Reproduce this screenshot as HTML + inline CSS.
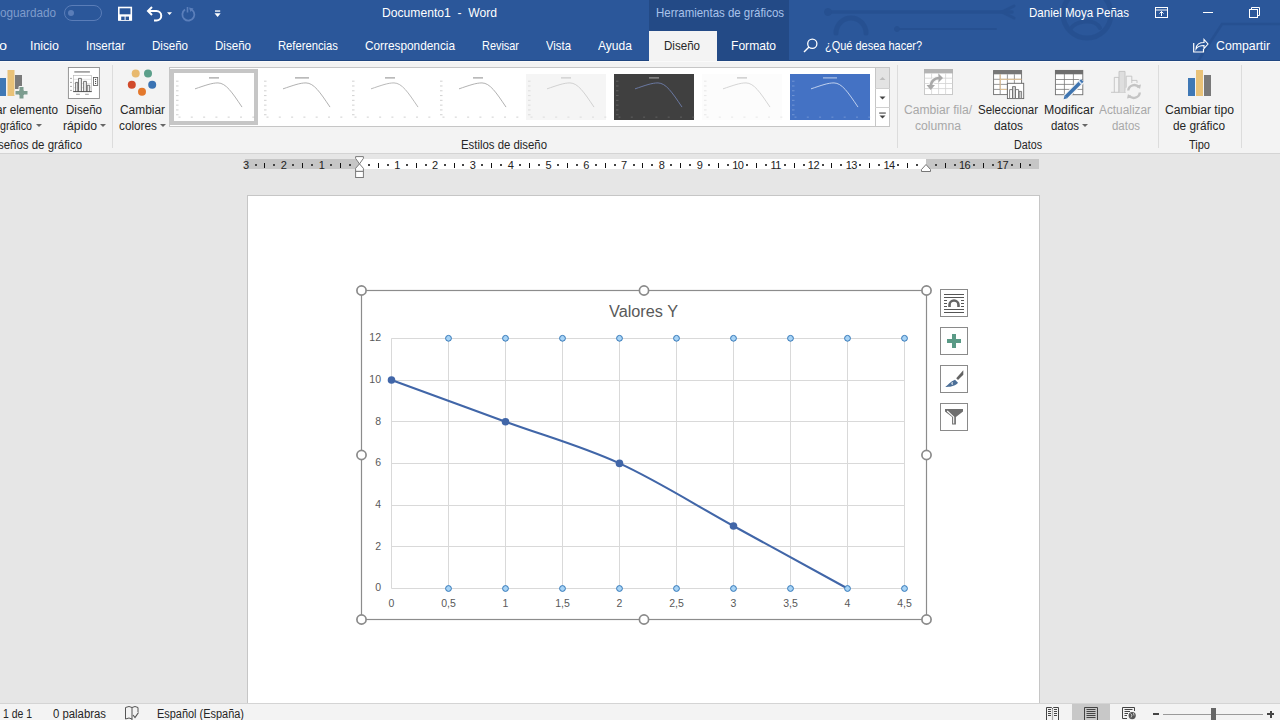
<!DOCTYPE html>
<html><head><meta charset="utf-8">
<style>
*{margin:0;padding:0;box-sizing:border-box}
html,body{width:1280px;height:720px;overflow:hidden;background:#e6e6e6;font-family:"Liberation Sans",sans-serif}
.a{position:absolute;white-space:nowrap}
.f{position:absolute;white-space:nowrap;transform-origin:0 0;transform:scaleX(var(--s,1))}
svg{position:absolute;overflow:visible}
#title{position:absolute;left:0;top:0;width:1280px;height:61px;background:#2b579a}
#ctx{position:absolute;left:649px;top:0;width:140px;height:61px;background:#234a86}
.tb{color:#fff;font-size:13px;line-height:13px;top:6px}
.tab{color:#fff;font-size:13px;line-height:13px;top:39px}
#ribbon{position:absolute;left:0;top:61px;width:1280px;height:93px;background:#f3f3f3;border-bottom:1px solid #d4d4d4}
.r1{font-size:12px;line-height:12px;color:#262626;top:104px}
.r2{font-size:12px;line-height:12px;color:#262626;top:120px}
.gl{font-size:12px;line-height:12px;color:#262626;top:139px}
.dis{color:#a8a8a8}
.sep{position:absolute;top:65px;width:1px;height:83px;background:#dcdcdc}
.dd{position:absolute;width:0;height:0;border-left:3px solid transparent;border-right:3px solid transparent;border-top:3.5px solid #666}
#page{position:absolute;left:247px;top:195px;width:793px;height:530px;background:#fff;border:1px solid #c6c6c6}
#status{position:absolute;left:0;top:703px;width:1280px;height:17px;background:#f3f3f3;border-top:1px solid #d4d4d4}
.st{font-size:12px;line-height:12px;color:#262626;top:708px}
.rn{position:absolute;top:159.5px;font-size:11px;line-height:11px;color:#222;text-align:center;width:16px}
.thumb{position:absolute;top:73px;width:80px;height:48px}
.cb{position:absolute;left:940px;width:28px;height:28px;background:#fff;border:1px solid #8a8a8a}
.yl{position:absolute;font-size:10.5px;line-height:10.5px;color:#595959;text-align:right;width:30px}
.xl{position:absolute;font-size:10.5px;line-height:10.5px;color:#595959;text-align:center;width:30px;top:598px}
</style></head><body>
<div id="title"></div>
<svg style="left:0;top:0" width="1280" height="61" viewBox="0 0 1280 61"><g fill="none" stroke="#234c8a" stroke-linecap="round" opacity="0.55"><path d="M828 12H1012" stroke-width="3.5"/><path d="M1014 6L1002 12L1014 18" stroke-width="3"/><circle cx="828" cy="12" r="3.5" fill="#234c8a"/><path d="M836 33A15 15 0 0 1 866 33" stroke-width="5"/><path d="M897 29H996" stroke-width="2"/><circle cx="897" cy="29" r="2.5" fill="#234c8a"/><circle cx="1087" cy="14" r="24" stroke-width="5"/><path d="M1070 30C1075 20 1095 18 1100 28" stroke-width="4"/><path d="M1198 61L1222 24H1280" stroke-width="2.5"/></g></svg>
<div id="ctx"></div>

<!-- title row -->
<div class="f tb" style="left:0;--s:0.9007;color:#7f9ccc">oguardado</div>
<div class="a" style="left:64px;top:5px;width:38px;height:16px;border:1px solid #5a7db8;border-radius:8px"></div>
<div class="a" style="left:68px;top:10px;width:6px;height:6px;border-radius:3px;background:#5a7db8"></div>
<svg style="left:110px;top:2px" width="120" height="24" viewBox="0 0 120 24"><rect x="8.8" y="5.5" width="12.5" height="12.5" fill="none" stroke="#fff" stroke-width="1.6"/><rect x="9" y="12.3" width="12" height="6" fill="#fff"/><rect x="11.2" y="14.6" width="3.4" height="3.4" fill="#2b579a"/><rect x="15.6" y="14.6" width="3.4" height="3.4" fill="#2b579a"/><path d="M38 9H46.5A4.7 4.7 0 0 1 46.5 18.5H44" fill="none" stroke="#fff" stroke-width="2"/><path d="M42 5L38 9L42 13" fill="none" stroke="#fff" stroke-width="2"/><path d="M57 10.3H62L59.5 13.1Z" fill="#fff"/><path d="M80 6.8A6 6 0 1 1 75 7.6" fill="none" stroke="#5b7fbb" stroke-width="1.8"/><path d="M77.5 5V10.5" fill="none" stroke="#5b7fbb" stroke-width="1.6"/><path d="M79 5.5L83.5 6.5L80.5 10Z" fill="#5b7fbb"/><rect x="105" y="8.4" width="5.2" height="1.3" fill="#fff"/><path d="M104.5 11.2H110.7L107.6 15Z" fill="#fff"/></svg>




<div class="f tb" style="left:382px;--s:0.9326">Documento1 &nbsp;-&nbsp; Word</div>
<div class="f tb" style="left:656px;--s:0.8813;color:#a9c2ea">Herramientas de gráficos</div>
<div class="f tb" style="left:1029px;--s:0.8870">Daniel Moya Peñas</div>
<svg style="left:1155px;top:7px" width="14" height="11" viewBox="0 0 14 11"><rect x="0.5" y="0.5" width="12" height="10" fill="none" stroke="#fff" stroke-width="1"/><path d="M0.5 3H12.5" stroke="#fff"/><path d="M6.5 9V4.5M4.5 6.5L6.5 4.5L8.5 6.5" fill="none" stroke="#fff"/></svg>
<div class="a" style="left:1203px;top:12px;width:10px;height:1px;background:#fff"></div>
<svg style="left:1249px;top:7px" width="11" height="11" viewBox="0 0 11 11"><rect x="0.5" y="2.5" width="8" height="8" fill="none" stroke="#fff"/><path d="M2.5 2.5V0.5H10.5V8.5H8.5" fill="none" stroke="#fff"/></svg>

<!-- tabs -->
<div class="f tab" style="left:-1px;--s:1.1058">o</div>
<div class="f tab" style="left:30px;--s:0.9552">Inicio</div>
<div class="f tab" style="left:86px;--s:0.8848">Insertar</div>
<div class="f tab" style="left:152px;--s:0.8896">Diseño</div>
<div class="f tab" style="left:215px;--s:0.8896">Diseño</div>
<div class="f tab" style="left:278px;--s:0.8649">Referencias</div>
<div class="f tab" style="left:365px;--s:0.9089">Correspondencia</div>
<div class="f tab" style="left:482px;--s:0.8394">Revisar</div>
<div class="f tab" style="left:546px;--s:0.8719">Vista</div>
<div class="f tab" style="left:598px;--s:0.9279">Ayuda</div>
<div class="a" style="left:649px;top:31px;width:68px;height:31px;background:#f3f3f3"></div>
<div class="f tab" style="left:664px;--s:0.8896;color:#262626">Diseño</div>
<div class="f tab" style="left:731px;--s:0.9296">Formato</div>
<svg style="left:803px;top:38px" width="15" height="15" viewBox="0 0 15 15"><circle cx="9.3" cy="5.7" r="4.6" fill="none" stroke="#fff" stroke-width="1.3"/><path d="M6 9L1 14" stroke="#fff" stroke-width="1.4"/></svg>
<div class="f tab" style="left:825px;--s:0.8442">¿Qué desea hacer?</div>
<svg style="left:1193px;top:38px" width="16" height="15" viewBox="0 0 16 15"><path d="M0.7 5V14H10.5V11" fill="none" stroke="#fff" stroke-width="1.2"/><path d="M3 11C3 6 7 4.5 11 4.5V1.5L15 6L11 10.5V7.5C7 7.5 4.5 8.5 3 11Z" fill="none" stroke="#fff" stroke-width="1.1"/></svg>
<div class="f tab" style="left:1216px;--s:0.9461">Compartir</div>

<div id="ribbon"></div>
<div class="a" style="left:0;top:60px;width:649px;height:1px;background:#204680"></div><div class="a" style="left:717px;top:60px;width:563px;height:1px;background:#204680"></div><div class="a" style="left:0;top:61px;width:1280px;height:1px;background:#fafafa"></div>

<!-- group 1 -->
<svg style="left:0;top:69px" width="30" height="31" viewBox="0 0 30 31"><rect x="-2" y="9" width="8" height="18" fill="#3f78b5"/><rect x="7.5" y="1" width="7" height="26" fill="#e9c278"/><rect x="15" y="6" width="7" height="14" fill="#7a7a7a"/><path d="M19 17.5H24V21.5H28V26H24V30H19V26H15V21.5H19Z" fill="#7c9c8f" stroke="#f3f3f3" stroke-width="1"/></svg>
<div class="f r1" style="left:-4.5px;--s:0.9783">ar elemento</div>
<div class="f r2" style="left:0;--s:0.8881">gráfico</div>
<div class="dd" style="left:36px;top:124px"></div>
<div class="f gl" style="left:-2px;--s:0.9539">seños de gráfico</div>

<svg style="left:64px;top:64px" width="40" height="38" viewBox="0 0 40 38"><rect x="4.4" y="3.5" width="31" height="31" fill="#fff" stroke="#8c8c8c" stroke-width="0.9"/><rect x="10.3" y="7.1" width="15.6" height="1.6" fill="#9a9a9a"/><rect x="9.4" y="11.3" width="18.2" height="16.2" fill="none" stroke="#b0b0b0" stroke-width="0.6"/><path d="M9.4 15.3H27.6M9.4 19.5H27.6M9.4 23.7H27.6" stroke="#c8c8c8" stroke-width="0.5"/><path d="M11.6 27.5V18.4H13.8V27.5M14.5 27.5V14.4H17.4V27.5M19.6 27.5V17.4H22.4V27.5M23.2 27.5V21.3H25.7V27.5" fill="#f0f0f0" stroke="#555" stroke-width="0.8"/><path d="M9.2 27.6H27.8" stroke="#444" stroke-width="0.9"/><path d="M6.1 14.4H7.9M6.1 18.4H7.9M6.1 22.4H7.9M6.1 26.4H7.9M12.1 30.3H15.8M21.1 30.3H24.8" stroke="#888" stroke-width="0.8"/><rect x="29.5" y="13.4" width="4.2" height="8" fill="#fff" stroke="#555" stroke-width="0.8"/><circle cx="31.6" cy="15.4" r="0.6" fill="#444"/><circle cx="31.6" cy="17.4" r="0.6" fill="#444"/><circle cx="31.6" cy="19.4" r="0.6" fill="#444"/></svg>
<div class="f r1" style="left:66px;--s:0.9636">Diseño</div>
<div class="f r2" style="left:63px;--s:1.0192">rápido</div>
<div class="dd" style="left:100px;top:124px"></div>
<div class="sep" style="left:112px"></div>

<svg style="left:127px;top:68px" width="30" height="28" viewBox="0 0 30 28"><circle cx="8.7" cy="5.5" r="4" fill="#e8b96e"/><circle cx="21" cy="5.5" r="4" fill="#5b9f8a"/><circle cx="4.8" cy="16.8" r="4" fill="#d14a2b"/><circle cx="25.2" cy="16.8" r="4" fill="#3a73b3"/><circle cx="15" cy="23.8" r="4" fill="#e3782c"/></svg>
<div class="f r1" style="left:120px;--s:0.9921">Cambiar</div>
<div class="f r2" style="left:119px;--s:0.9822">colores</div>
<div class="dd" style="left:160px;top:124px"></div>

<!-- gallery -->
<div class="a" style="left:169px;top:67px;width:721px;height:60px;background:#fff;border:1px solid #c6c6c6"></div>
<div class="a" style="left:170px;top:69px;width:88px;height:56px;background:#fff;border:4px solid #c6c6c6"></div>
<svg style="left:174px;top:74px" width="80" height="46" viewBox="0 0 80 48" preserveAspectRatio="none"><rect width="80" height="48" fill="#fff"/><rect x="35.0" y="3.4" width="10" height="1.3" fill="#555" opacity="0.55"/><path d="M21 15.5C31 12 38 9.2 44 9.3C52 9.5 58 19 68 34.5" fill="none" stroke="#a6a6a6" stroke-width="0.9"/><path d="M2 7.5H4.5M2 12.5H4.5M2 17.5H4.5M2 22.5H4.5M2 27.5H4.5M2 32.5H4.5M2 37.5H4.5M2 42.5H4.5M4.5 45H6.5M16.8 45H18.8M29.1 45H31.1M41.4 45H43.4M53.7 45H55.7M66.0 45H68.0M78.3 45H80.3" stroke="#9a9a9a" stroke-width="0.9" opacity="0.5"/></svg>
<svg style="left:262px;top:74px" width="80" height="46" viewBox="0 0 80 48" preserveAspectRatio="none"><rect width="80" height="48" fill="#fff"/><rect x="33.0" y="3.4" width="14" height="1.3" fill="#555" opacity="0.55"/><path d="M21 15.5C31 12 38 9.2 44 9.3C52 9.5 58 19 68 34.5" fill="none" stroke="#a6a6a6" stroke-width="0.9"/><path d="M2 7.5H4.5M2 12.5H4.5M2 17.5H4.5M2 22.5H4.5M2 27.5H4.5M2 32.5H4.5M2 37.5H4.5M2 42.5H4.5M4.5 45H6.5M16.8 45H18.8M29.1 45H31.1M41.4 45H43.4M53.7 45H55.7M66.0 45H68.0M78.3 45H80.3" stroke="#9a9a9a" stroke-width="0.9" opacity="0.5"/></svg>
<svg style="left:350px;top:74px" width="80" height="46" viewBox="0 0 80 48" preserveAspectRatio="none"><rect width="80" height="48" fill="#fff"/><rect x="35.0" y="3.4" width="10" height="1.3" fill="#555" opacity="0.55"/><path d="M21 15.5C31 12 38 9.2 44 9.3C52 9.5 58 19 68 34.5" fill="none" stroke="#b0b0b0" stroke-width="0.9"/><path d="M2 7.5H4.5M2 12.5H4.5M2 17.5H4.5M2 22.5H4.5M2 27.5H4.5M2 32.5H4.5M2 37.5H4.5M2 42.5H4.5M4.5 45H6.5M16.8 45H18.8M29.1 45H31.1M41.4 45H43.4M53.7 45H55.7M66.0 45H68.0M78.3 45H80.3" stroke="#9a9a9a" stroke-width="0.9" opacity="0.5"/></svg>
<svg style="left:438px;top:74px" width="80" height="46" viewBox="0 0 80 48" preserveAspectRatio="none"><rect width="80" height="48" fill="#fff"/><rect x="35.0" y="3.4" width="10" height="1.3" fill="#555" opacity="0.55"/><path d="M21 15.5C31 12 38 9.2 44 9.3C52 9.5 58 19 68 34.5" fill="none" stroke="#a6a6a6" stroke-width="0.9"/><path d="M2 7.5H4.5M2 12.5H4.5M2 17.5H4.5M2 22.5H4.5M2 27.5H4.5M2 32.5H4.5M2 37.5H4.5M2 42.5H4.5M4.5 45H6.5M16.8 45H18.8M29.1 45H31.1M41.4 45H43.4M53.7 45H55.7M66.0 45H68.0M78.3 45H80.3" stroke="#9a9a9a" stroke-width="0.9" opacity="0.5"/></svg>
<svg style="left:526px;top:74px" width="80" height="46" viewBox="0 0 80 48" preserveAspectRatio="none"><rect width="80" height="48" fill="#f5f5f5"/><rect x="35.0" y="3.4" width="10" height="1.3" fill="#aaa" opacity="0.55"/><path d="M21 15.5C31 12 38 9.2 44 9.3C52 9.5 58 19 68 34.5" fill="none" stroke="#cccccc" stroke-width="0.9"/><path d="M2 7.5H4.5M2 12.5H4.5M2 17.5H4.5M2 22.5H4.5M2 27.5H4.5M2 32.5H4.5M2 37.5H4.5M2 42.5H4.5M4.5 45H6.5M16.8 45H18.8M29.1 45H31.1M41.4 45H43.4M53.7 45H55.7M66.0 45H68.0M78.3 45H80.3" stroke="#c0c0c0" stroke-width="0.9" opacity="0.5"/></svg>
<svg style="left:614px;top:74px" width="80" height="46" viewBox="0 0 80 48" preserveAspectRatio="none"><rect width="80" height="48" fill="#404040"/><rect x="35.0" y="3.4" width="10" height="1.3" fill="#ddd" opacity="0.55"/><path d="M21 15.5C31 12 38 9.2 44 9.3C52 9.5 58 19 68 34.5" fill="none" stroke="#6f7fae" stroke-width="0.9"/><path d="M2 7.5H4.5M2 12.5H4.5M2 17.5H4.5M2 22.5H4.5M2 27.5H4.5M2 32.5H4.5M2 37.5H4.5M2 42.5H4.5M4.5 45H6.5M16.8 45H18.8M29.1 45H31.1M41.4 45H43.4M53.7 45H55.7M66.0 45H68.0M78.3 45H80.3" stroke="#888" stroke-width="0.9" opacity="0.5"/></svg>
<svg style="left:702px;top:74px" width="80" height="46" viewBox="0 0 80 48" preserveAspectRatio="none"><rect width="80" height="48" fill="#fcfcfc"/><rect x="35.0" y="3.4" width="10" height="1.3" fill="#999" opacity="0.55"/><path d="M21 15.5C31 12 38 9.2 44 9.3C52 9.5 58 19 68 34.5" fill="none" stroke="#cfcfcf" stroke-width="0.9"/><path d="M2 7.5H4.5M2 12.5H4.5M2 17.5H4.5M2 22.5H4.5M2 27.5H4.5M2 32.5H4.5M2 37.5H4.5M2 42.5H4.5M4.5 45H6.5M16.8 45H18.8M29.1 45H31.1M41.4 45H43.4M53.7 45H55.7M66.0 45H68.0M78.3 45H80.3" stroke="#cfcfcf" stroke-width="0.9" opacity="0.5"/></svg>
<svg style="left:790px;top:74px" width="80" height="46" viewBox="0 0 80 48" preserveAspectRatio="none"><rect width="80" height="48" fill="#4472c4"/><rect x="33.0" y="3.4" width="14" height="1.3" fill="#fff" opacity="0.55"/><path d="M21 15.5C31 12 38 9.2 44 9.3C52 9.5 58 19 68 34.5" fill="none" stroke="#cfdcf2" stroke-width="0.9"/><path d="M2 7.5H4.5M2 12.5H4.5M2 17.5H4.5M2 22.5H4.5M2 27.5H4.5M2 32.5H4.5M2 37.5H4.5M2 42.5H4.5M4.5 45H6.5M16.8 45H18.8M29.1 45H31.1M41.4 45H43.4M53.7 45H55.7M66.0 45H68.0M78.3 45H80.3" stroke="#a9c0e8" stroke-width="0.9" opacity="0.5"/></svg>
<div class="a" style="left:875px;top:67px;width:15px;height:60px;background:#fff;border:1px solid #c6c6c6"></div>
<div class="a" style="left:876px;top:68px;width:13px;height:20px;background:#e3e3e3"></div>
<div class="a" style="left:875px;top:88px;width:15px;height:1px;background:#d0d0d0"></div>
<div class="a" style="left:875px;top:107px;width:15px;height:1px;background:#d0d0d0"></div>
<svg style="left:878px;top:73px" width="9" height="50" viewBox="0 0 9 50"><path d="M1.5 7L4.5 4L7.5 7Z" fill="#bdbdbd"/><path d="M1.5 23.5H7.5L4.5 26.5Z" fill="#444"/><rect x="1.2" y="39.5" width="6.6" height="1.1" fill="#444"/><path d="M1.5 42.5H7.5L4.5 45.5Z" fill="#444"/></svg>
<div class="f gl" style="left:461px;--s:0.9478">Estilos de diseño</div>
<div class="sep" style="left:897px"></div>

<!-- datos group -->
<svg style="left:918px;top:66px" width="112" height="36" viewBox="0 0 112 36"><rect x="6.4" y="3.4" width="28.2" height="25" fill="#fff" stroke="#bdbdbd" stroke-width="0.8"/><rect x="6" y="3" width="29" height="4.4" fill="#b4b4b4"/><path d="M6.4 12.2H34.6M6.4 17.5H34.6M6.4 22.6H34.6M13.6 7.4V28.4M20.6 7.4V28.4M27.6 7.4V28.4" stroke="#d2d2d2" stroke-width="0.8"/><path d="M12.7 22C12.5 16 16 12 21.5 12" fill="none" stroke="#f6f6f6" stroke-width="5"/><path d="M12.7 21.5C12.5 16 16 12 21.5 12" fill="none" stroke="#a9a9a9" stroke-width="2.6"/><path d="M20.5 7.5L25 12L20.5 16.5Z" fill="#a9a9a9"/><path d="M8.5 19L12.7 24L17 19Z" fill="#a9a9a9"/><rect x="75.6" y="4.6" width="28" height="24" fill="#fff" stroke="#6e6e6e" stroke-width="0.9"/><rect x="75.2" y="4.2" width="28.8" height="4.1" fill="#777"/><path d="M75.6 13.3H103.6M75.6 18.4H103.6M75.6 23.4H103.6M82.2 8.3V28.6M89.4 8.3V28.6M96.4 8.3V28.6" stroke="#7d7d7d" stroke-width="0.8"/><path d="M82.2 8.3V23.4M82.2 13.3H103.6M82.2 23.4H89" stroke="#ecc793" stroke-width="0.9"/><rect x="89.4" y="17.3" width="16.3" height="15.3" fill="#fff" stroke="#666" stroke-width="0.9"/><path d="M91.6 32V23.6H94.5V32M97.5 32V23.6H100.6V32" fill="#fff" stroke="#666" stroke-width="0.8"/><path d="M94.5 32V20.6H97.5V32M101 32V25.4H103.6V32" fill="#cfcfcf" stroke="#666" stroke-width="0.8"/></svg>
<div class="f r1 dis" style="left:904px;--s:1.0095">Cambiar fila/</div>
<div class="f r2 dis" style="left:915px;--s:1.0141">columna</div>


<div class="f r1" style="left:978px;--s:0.9569">Seleccionar</div>
<div class="f r2" style="left:994px;--s:0.9878">datos</div>

<svg style="left:1050px;top:66px" width="96" height="36" viewBox="0 0 96 36"><rect x="5.4" y="4.4" width="27.4" height="24.3" fill="#fff" stroke="#6e6e6e" stroke-width="0.9"/><rect x="5" y="4" width="28" height="4.3" fill="#6e6e6e"/><path d="M5.4 13.5H32.8M5.4 18.4H32.8M5.4 23.4H32.8M14.4 8V28.7M23.4 8V28.7" stroke="#7a7a7a" stroke-width="0.8"/><path d="M15.5 31.3L32.5 14.3" stroke="#f3f3f3" stroke-width="6"/><path d="M15.8 31L32.3 14.5" stroke="#3e74b0" stroke-width="3.6"/><path d="M29.6 17.2L30.8 16" stroke="#cfe0f3" stroke-width="4"/><path d="M13.6 33.2L14.6 29.5L17.3 32.2Z" fill="#3e74b0"/><g fill="none" stroke="#c2c2c2" stroke-width="0.9"><path d="M61 26.3H76"/><path d="M64.3 26.3V11.4H69V26.3"/><path d="M69 26.3V5.4H75V26.3" fill="#dedede"/><path d="M76.2 22V10.2H81.8V17M81.8 14.4H87V17"/></g><circle cx="84" cy="25.5" r="8.5" fill="#f3f3f3"/><path d="M78.2 24.5A6 6 0 0 1 89 21.5M89.8 26.5A6 6 0 0 1 79 29.5" fill="none" stroke="#c4c4c4" stroke-width="2.4"/><path d="M86.5 19.5L91 18.5L90 23Z M81.5 31.5L77 32.5L78 28Z" fill="#c4c4c4"/></svg>
<div class="f r1" style="left:1044px;--s:1.0270">Modificar</div>
<div class="f r2" style="left:1051px;--s:0.9537">datos</div>
<div class="dd" style="left:1082px;top:124px"></div>


<div class="f r1 dis" style="left:1099px;--s:0.9870">Actualizar</div>
<div class="f r2 dis" style="left:1112px;--s:0.9537">datos</div>
<div class="f gl" style="left:1014px;--s:0.8929">Datos</div>
<div class="sep" style="left:1158px"></div>

<svg style="left:1188px;top:70px" width="24" height="26" viewBox="0 0 24 26"><rect x="0" y="8" width="7" height="18" fill="#3f78b5"/><rect x="8" y="0" width="7" height="26" fill="#e9c278"/><rect x="16" y="5" width="7" height="21" fill="#797979"/></svg>
<div class="f r1" style="left:1165px;--s:1.0142">Cambiar tipo</div>
<div class="f r2" style="left:1173px;--s:0.9867">de gráfico</div>
<div class="f gl" style="left:1189px;--s:0.9168">Tipo</div>
<div class="sep" style="left:1241px"></div>

<!-- ruler -->
<div class="a" style="left:245px;top:159px;width:794px;height:10px;background:#c6c6c6"></div>
<div class="a" style="left:360px;top:159px;width:566px;height:10px;background:#fff"></div>
<div class="rn" style="left:238.1px">3</div>
<div class="a" style="left:255px;top:164px;width:2px;height:2px;background:#444"></div>
<div class="a" style="left:264px;top:163px;width:1px;height:5px;background:#111"></div>
<div class="a" style="left:273px;top:164px;width:2px;height:2px;background:#444"></div>
<div class="rn" style="left:275.9px">2</div>
<div class="a" style="left:292px;top:164px;width:2px;height:2px;background:#444"></div>
<div class="a" style="left:302px;top:163px;width:1px;height:5px;background:#111"></div>
<div class="a" style="left:311px;top:164px;width:2px;height:2px;background:#444"></div>
<div class="rn" style="left:313.7px">1</div>
<div class="a" style="left:330px;top:164px;width:2px;height:2px;background:#444"></div>
<div class="a" style="left:340px;top:163px;width:1px;height:5px;background:#111"></div>
<div class="a" style="left:349px;top:164px;width:2px;height:2px;background:#444"></div>
<div class="a" style="left:368px;top:164px;width:2px;height:2px;background:#444"></div>
<div class="a" style="left:378px;top:163px;width:1px;height:5px;background:#111"></div>
<div class="a" style="left:387px;top:164px;width:2px;height:2px;background:#444"></div>
<div class="rn" style="left:389.3px">1</div>
<div class="a" style="left:406px;top:164px;width:2px;height:2px;background:#444"></div>
<div class="a" style="left:416px;top:163px;width:1px;height:5px;background:#111"></div>
<div class="a" style="left:425px;top:164px;width:2px;height:2px;background:#444"></div>
<div class="rn" style="left:427.1px">2</div>
<div class="a" style="left:444px;top:164px;width:2px;height:2px;background:#444"></div>
<div class="a" style="left:454px;top:163px;width:1px;height:5px;background:#111"></div>
<div class="a" style="left:462px;top:164px;width:2px;height:2px;background:#444"></div>
<div class="rn" style="left:464.9px">3</div>
<div class="a" style="left:481px;top:164px;width:2px;height:2px;background:#444"></div>
<div class="a" style="left:491px;top:163px;width:1px;height:5px;background:#111"></div>
<div class="a" style="left:500px;top:164px;width:2px;height:2px;background:#444"></div>
<div class="rn" style="left:502.7px">4</div>
<div class="a" style="left:519px;top:164px;width:2px;height:2px;background:#444"></div>
<div class="a" style="left:529px;top:163px;width:1px;height:5px;background:#111"></div>
<div class="a" style="left:538px;top:164px;width:2px;height:2px;background:#444"></div>
<div class="rn" style="left:540.5px">5</div>
<div class="a" style="left:557px;top:164px;width:2px;height:2px;background:#444"></div>
<div class="a" style="left:567px;top:163px;width:1px;height:5px;background:#111"></div>
<div class="a" style="left:576px;top:164px;width:2px;height:2px;background:#444"></div>
<div class="rn" style="left:578.3px">6</div>
<div class="a" style="left:595px;top:164px;width:2px;height:2px;background:#444"></div>
<div class="a" style="left:605px;top:163px;width:1px;height:5px;background:#111"></div>
<div class="a" style="left:614px;top:164px;width:2px;height:2px;background:#444"></div>
<div class="rn" style="left:616.1px">7</div>
<div class="a" style="left:633px;top:164px;width:2px;height:2px;background:#444"></div>
<div class="a" style="left:642px;top:163px;width:1px;height:5px;background:#111"></div>
<div class="a" style="left:651px;top:164px;width:2px;height:2px;background:#444"></div>
<div class="rn" style="left:653.9px">8</div>
<div class="a" style="left:670px;top:164px;width:2px;height:2px;background:#444"></div>
<div class="a" style="left:680px;top:163px;width:1px;height:5px;background:#111"></div>
<div class="a" style="left:689px;top:164px;width:2px;height:2px;background:#444"></div>
<div class="rn" style="left:691.7px">9</div>
<div class="a" style="left:708px;top:164px;width:2px;height:2px;background:#444"></div>
<div class="a" style="left:718px;top:163px;width:1px;height:5px;background:#111"></div>
<div class="a" style="left:727px;top:164px;width:2px;height:2px;background:#444"></div>
<div class="rn" style="left:729.8px;letter-spacing:-0.6px">10</div>
<div class="a" style="left:746px;top:164px;width:2px;height:2px;background:#444"></div>
<div class="a" style="left:756px;top:163px;width:1px;height:5px;background:#111"></div>
<div class="a" style="left:765px;top:164px;width:2px;height:2px;background:#444"></div>
<div class="rn" style="left:767.6px;letter-spacing:-0.6px">11</div>
<div class="a" style="left:784px;top:164px;width:2px;height:2px;background:#444"></div>
<div class="a" style="left:794px;top:163px;width:1px;height:5px;background:#111"></div>
<div class="a" style="left:803px;top:164px;width:2px;height:2px;background:#444"></div>
<div class="rn" style="left:805.4px;letter-spacing:-0.6px">12</div>
<div class="a" style="left:822px;top:164px;width:2px;height:2px;background:#444"></div>
<div class="a" style="left:831px;top:163px;width:1px;height:5px;background:#111"></div>
<div class="a" style="left:840px;top:164px;width:2px;height:2px;background:#444"></div>
<div class="rn" style="left:843.2px;letter-spacing:-0.6px">13</div>
<div class="a" style="left:859px;top:164px;width:2px;height:2px;background:#444"></div>
<div class="a" style="left:869px;top:163px;width:1px;height:5px;background:#111"></div>
<div class="a" style="left:878px;top:164px;width:2px;height:2px;background:#444"></div>
<div class="rn" style="left:881.0px;letter-spacing:-0.6px">14</div>
<div class="a" style="left:897px;top:164px;width:2px;height:2px;background:#444"></div>
<div class="a" style="left:907px;top:163px;width:1px;height:5px;background:#111"></div>
<div class="a" style="left:916px;top:164px;width:2px;height:2px;background:#444"></div>
<div class="a" style="left:935px;top:164px;width:2px;height:2px;background:#444"></div>
<div class="a" style="left:945px;top:163px;width:1px;height:5px;background:#111"></div>
<div class="a" style="left:954px;top:164px;width:2px;height:2px;background:#444"></div>
<div class="rn" style="left:956.6px;letter-spacing:-0.6px">16</div>
<div class="a" style="left:973px;top:164px;width:2px;height:2px;background:#444"></div>
<div class="a" style="left:983px;top:163px;width:1px;height:5px;background:#111"></div>
<div class="a" style="left:992px;top:164px;width:2px;height:2px;background:#444"></div>
<div class="rn" style="left:994.4px;letter-spacing:-0.6px">17</div>
<div class="a" style="left:1011px;top:164px;width:2px;height:2px;background:#444"></div>
<div class="a" style="left:1020px;top:163px;width:1px;height:5px;background:#111"></div>
<div class="a" style="left:1029px;top:164px;width:2px;height:2px;background:#444"></div>
<svg style="left:355px;top:156px" width="10" height="23" viewBox="0 0 10 23"><path d="M0.6 0.6H8.4V2.4L4.5 7.9L0.6 2.4Z M4.5 7.9L8.4 12.3V15.4H0.6V12.3Z" fill="#fff" stroke="#7a7a7a" stroke-width="1"/><rect x="0.6" y="15.4" width="7.8" height="6.1" fill="#fff" stroke="#7a7a7a" stroke-width="1"/></svg>
<svg style="left:920px;top:163px" width="12" height="9" viewBox="0 0 12 9"><path d="M1.5 8.5V6.5L6 1.5L10.5 6.5V8.5Z" fill="#fff" stroke="#777"/></svg>

<div id="page"></div>
<svg style="left:0;top:0" width="1280" height="720" viewBox="0 0 1280 720"><path d="M391.5 588.5H904.5" stroke="#d9d9d9" stroke-width="1"/><path d="M391.5 546.5H904.5" stroke="#d9d9d9" stroke-width="1"/><path d="M391.5 505.5H904.5" stroke="#d9d9d9" stroke-width="1"/><path d="M391.5 463.5H904.5" stroke="#d9d9d9" stroke-width="1"/><path d="M391.5 421.5H904.5" stroke="#d9d9d9" stroke-width="1"/><path d="M391.5 380.5H904.5" stroke="#d9d9d9" stroke-width="1"/><path d="M391.5 338.5H904.5" stroke="#d9d9d9" stroke-width="1"/><path d="M391.5 338.3V588.5" stroke="#d9d9d9" stroke-width="1"/><path d="M448.5 338.3V588.5" stroke="#d9d9d9" stroke-width="1"/><path d="M505.5 338.3V588.5" stroke="#d9d9d9" stroke-width="1"/><path d="M562.5 338.3V588.5" stroke="#d9d9d9" stroke-width="1"/><path d="M619.5 338.3V588.5" stroke="#d9d9d9" stroke-width="1"/><path d="M676.5 338.3V588.5" stroke="#d9d9d9" stroke-width="1"/><path d="M733.5 338.3V588.5" stroke="#d9d9d9" stroke-width="1"/><path d="M790.5 338.3V588.5" stroke="#d9d9d9" stroke-width="1"/><path d="M847.5 338.3V588.5" stroke="#d9d9d9" stroke-width="1"/><path d="M904.5 338.3V588.5" stroke="#d9d9d9" stroke-width="1"/><path d="M391.5 380.0C410.5 386.9 467.5 407.8 505.5 421.7C543.5 435.6 581.5 446.0 619.5 463.4C657.5 480.8 695.5 505.1 733.5 526.0C771.5 546.8 828.5 578.1 847.5 588.5" fill="none" stroke="#4166a8" stroke-width="2.1" stroke-linejoin="round"/><circle cx="391.5" cy="380.0" r="3.8" fill="#4166a8"/><circle cx="505.5" cy="421.7" r="3.8" fill="#4166a8"/><circle cx="619.5" cy="463.4" r="3.8" fill="#4166a8"/><circle cx="733.5" cy="526.0" r="3.8" fill="#4166a8"/><circle cx="448.5" cy="338.3" r="2.9" fill="#a8d4f6" stroke="#3377b8" stroke-width="1"/><circle cx="448.5" cy="588.5" r="2.9" fill="#a8d4f6" stroke="#3377b8" stroke-width="1"/><circle cx="505.5" cy="338.3" r="2.9" fill="#a8d4f6" stroke="#3377b8" stroke-width="1"/><circle cx="505.5" cy="588.5" r="2.9" fill="#a8d4f6" stroke="#3377b8" stroke-width="1"/><circle cx="562.5" cy="338.3" r="2.9" fill="#a8d4f6" stroke="#3377b8" stroke-width="1"/><circle cx="562.5" cy="588.5" r="2.9" fill="#a8d4f6" stroke="#3377b8" stroke-width="1"/><circle cx="619.5" cy="338.3" r="2.9" fill="#a8d4f6" stroke="#3377b8" stroke-width="1"/><circle cx="619.5" cy="588.5" r="2.9" fill="#a8d4f6" stroke="#3377b8" stroke-width="1"/><circle cx="676.5" cy="338.3" r="2.9" fill="#a8d4f6" stroke="#3377b8" stroke-width="1"/><circle cx="676.5" cy="588.5" r="2.9" fill="#a8d4f6" stroke="#3377b8" stroke-width="1"/><circle cx="733.5" cy="338.3" r="2.9" fill="#a8d4f6" stroke="#3377b8" stroke-width="1"/><circle cx="733.5" cy="588.5" r="2.9" fill="#a8d4f6" stroke="#3377b8" stroke-width="1"/><circle cx="790.5" cy="338.3" r="2.9" fill="#a8d4f6" stroke="#3377b8" stroke-width="1"/><circle cx="790.5" cy="588.5" r="2.9" fill="#a8d4f6" stroke="#3377b8" stroke-width="1"/><circle cx="847.5" cy="338.3" r="2.9" fill="#a8d4f6" stroke="#3377b8" stroke-width="1"/><circle cx="847.5" cy="588.5" r="2.9" fill="#a8d4f6" stroke="#3377b8" stroke-width="1"/><circle cx="904.5" cy="338.3" r="2.9" fill="#a8d4f6" stroke="#3377b8" stroke-width="1"/><circle cx="904.5" cy="588.5" r="2.9" fill="#a8d4f6" stroke="#3377b8" stroke-width="1"/><rect x="361.5" y="290.5" width="565.0" height="329.0" fill="none" stroke="#8c8c8c" stroke-width="1.2"/><circle cx="361.5" cy="290.5" r="4.6" fill="#fff" stroke="#8a8a8a" stroke-width="1.7"/><circle cx="644.0" cy="290.5" r="4.6" fill="#fff" stroke="#8a8a8a" stroke-width="1.7"/><circle cx="926.5" cy="290.5" r="4.6" fill="#fff" stroke="#8a8a8a" stroke-width="1.7"/><circle cx="361.5" cy="455.0" r="4.6" fill="#fff" stroke="#8a8a8a" stroke-width="1.7"/><circle cx="926.5" cy="455.0" r="4.6" fill="#fff" stroke="#8a8a8a" stroke-width="1.7"/><circle cx="361.5" cy="619.5" r="4.6" fill="#fff" stroke="#8a8a8a" stroke-width="1.7"/><circle cx="644.0" cy="619.5" r="4.6" fill="#fff" stroke="#8a8a8a" stroke-width="1.7"/><circle cx="926.5" cy="619.5" r="4.6" fill="#fff" stroke="#8a8a8a" stroke-width="1.7"/></svg>
<div class="f" style="left:609px;top:304px;font-size:16px;line-height:16px;color:#595959;--s:1.0163">Valores Y</div>
<div class="yl" style="left:351px;top:582.0px">0</div>
<div class="yl" style="left:351px;top:541.0px">2</div>
<div class="yl" style="left:351px;top:499.0px">4</div>
<div class="yl" style="left:351px;top:457.0px">6</div>
<div class="yl" style="left:351px;top:416.0px">8</div>
<div class="yl" style="left:351px;top:374.0px">10</div>
<div class="yl" style="left:351px;top:332.0px">12</div>
<div class="xl" style="left:376.5px">0</div>
<div class="xl" style="left:433.5px">0,5</div>
<div class="xl" style="left:490.5px">1</div>
<div class="xl" style="left:547.5px">1,5</div>
<div class="xl" style="left:604.5px">2</div>
<div class="xl" style="left:661.5px">2,5</div>
<div class="xl" style="left:718.5px">3</div>
<div class="xl" style="left:775.5px">3,5</div>
<div class="xl" style="left:832.5px">4</div>
<div class="xl" style="left:889.5px">4,5</div>
<div class="cb" style="top:289px"></div>
<div class="cb" style="top:327px"></div>
<div class="cb" style="top:365px"></div>
<div class="cb" style="top:403px"></div>
<svg style="left:943px;top:292px" width="22" height="22" viewBox="0 0 22 22"><path d="M1 2.5H21M1 5.5H21M1 17.5H21M1 20.5H21" stroke="#555" stroke-width="1.2"/><path d="M1 8.5H4M1 11.5H4M1 14.5H4M18 8.5H21M18 11.5H21M18 14.5H21" stroke="#555" stroke-width="1.2"/><path d="M6.5 15V13A4.5 4.5 0 0 1 15.5 13V15" fill="none" stroke="#666" stroke-width="2.6"/></svg>
<svg style="left:946px;top:333px" width="16" height="16" viewBox="0 0 16 16"><path d="M6 1H10V6H15V10H10V15H6V10H1V6H6Z" fill="#5a9a86"/></svg>
<svg style="left:935px;top:360px" width="40" height="75" viewBox="0 0 40 75"><path d="M28.3 10.2V14.8L23 20L21.2 18.3Z" fill="#636363"/><path d="M20 19.8L23 22.8C21 25.8 15.5 27.2 10.3 26.9C13 25 15.5 21.5 20 19.8Z" fill="#4b6f98"/><path d="M17.5 22.3C16.8 23 16.8 24 17.5 24.6" fill="none" stroke="#fff" stroke-width="1.1"/><path d="M10 49H28V51.5L20.9 57V64.6H17.1V57L10 51.5Z" fill="#6e6e6e"/><path d="M12.2 51L18.7 56.9V63.5" fill="none" stroke="#fff" stroke-width="1.1"/></svg>

<div id="status"></div>
<div class="f st" style="left:3px;--s:0.8689">1 de 1</div>
<div class="f st" style="left:53px;--s:0.9456">0 palabras</div>
<svg style="left:125px;top:706px" width="14" height="14" viewBox="0 0 14 14"><path d="M0.5 1.5L4 0.5L7 1.5V13L4 12L0.5 13Z" fill="none" stroke="#555"/><path d="M7 1.5L10 0.5L13 1.5V6" fill="none" stroke="#555"/><path d="M8 9L10 11.5L13.5 6.5" fill="none" stroke="#555" stroke-width="1.2"/><path d="M7 13V14" stroke="#555"/></svg>
<div class="f st" style="left:157px;--s:0.9120">Español (España)</div>
<div class="a" style="left:1072px;top:704px;width:38px;height:16px;background:#c8c8c8"></div>
<svg style="left:1046px;top:707px" width="14" height="13" viewBox="0 0 14 13"><path d="M0.5 13V0.5H5.5L6.5 1.5L7.5 0.5H12.5V13" fill="none" stroke="#444"/><path d="M2 2.5H5M2 4.5H5M2 6.5H5M2 8.5H5M8 2.5H11M8 4.5H11M8 6.5H11M8 8.5H11" stroke="#444"/><path d="M6.5 1.5V13" stroke="#666" stroke-width="1.2" stroke-dasharray="1 1"/></svg>
<svg style="left:1084px;top:707px" width="14" height="13" viewBox="0 0 14 13"><path d="M0.5 13V0.5H13.5V13" fill="none" stroke="#444"/><path d="M2.5 2.5H11.5M2.5 4.5H11.5M2.5 6.5H11.5M2.5 8.5H11.5M2.5 10.5H11.5" stroke="#444"/></svg>
<svg style="left:1122px;top:707px" width="15" height="13" viewBox="0 0 15 13"><path d="M5 11.5H0.5V0.5H12.5V4" fill="none" stroke="#444"/><path d="M2.5 2.5H10.5M2.5 4.5H8M2.5 6.5H6M2.5 8.5H5" stroke="#444"/><circle cx="10.2" cy="8.6" r="3.6" fill="#555"/><path d="M8.5 6.5L10 8L9 10.5M11.5 6L12 8.5" stroke="#ddd" stroke-width="0.8" fill="none"/></svg>
<div class="a" style="left:1153px;top:713px;width:6px;height:2px;background:#444"></div>
<div class="a" style="left:1163px;top:714px;width:100px;height:1px;background:#9a9a9a"></div>
<div class="a" style="left:1211px;top:708px;width:5px;height:12px;background:#666"></div>
<div class="a" style="left:1267px;top:713px;width:7px;height:2px;background:#444"></div>
<div class="a" style="left:1269.5px;top:710.5px;width:2px;height:7px;background:#444"></div>
</body></html>
